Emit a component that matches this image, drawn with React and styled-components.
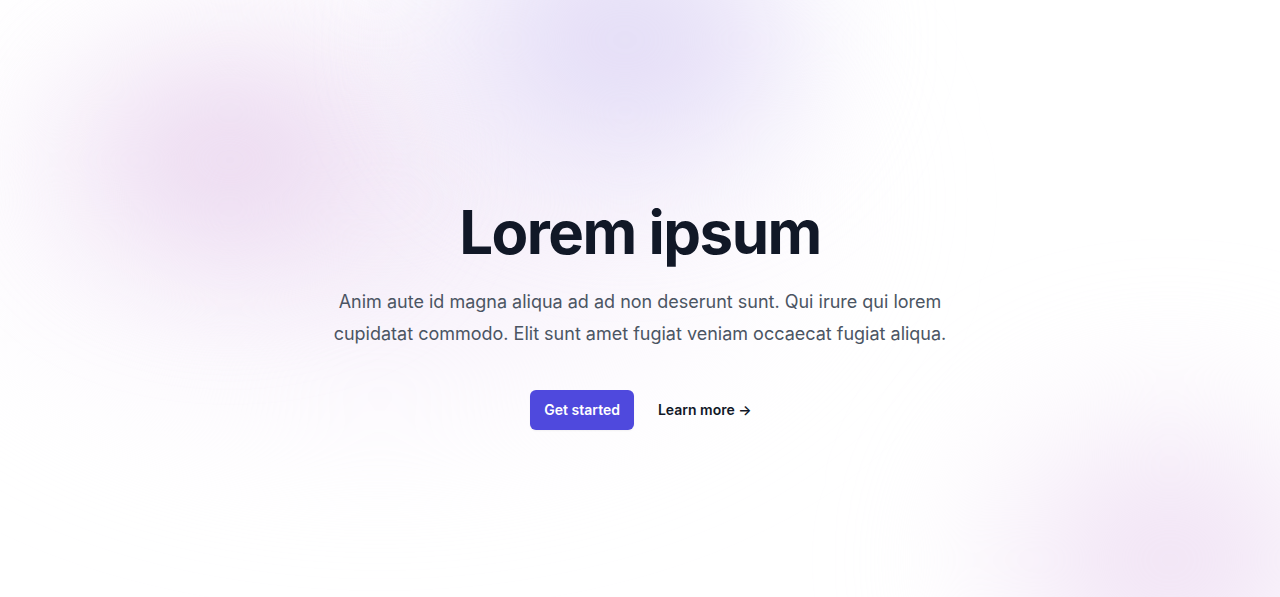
import React from 'react';
import styled, { createGlobalStyle } from 'styled-components';

const GlobalStyle = createGlobalStyle`
  html, body {
    margin: 0;
    padding: 0;
    background: #ffffff;
  }
  body {
    font-family: Inter, 'Noto Sans', sans-serif;
    -webkit-font-smoothing: antialiased;
  }
`;

const Page = styled.div`
  position: relative;
  isolation: isolate;
  overflow: hidden;
  height: 597px;
  background: #ffffff;
`;

const Blob = styled.div`
  position: absolute;
  z-index: -1;
  border-radius: 50%;
  pointer-events: none;
  filter: blur(${p => p.$blur || 60}px);
`;

const Hero = styled.main`
  display: flex;
  flex-direction: column;
  align-items: center;
  text-align: center;
  padding-top: 202px;
`;

const Title = styled.h1`
  margin: 0;
  font-size: 60px;
  line-height: 60px;
  font-weight: 700;
  letter-spacing: -0.025em;
  color: #111827;
`;

const Lead = styled.p`
  margin: 24px 0 0;
  max-width: 640px;
  font-size: 18px;
  line-height: 32px;
  color: #4b5563;
`;

const Actions = styled.div`
  margin-top: 40px;
  padding-left: 2px;
  display: flex;
  align-items: center;
  gap: 24px;
`;

const PrimaryButton = styled.a`
  display: inline-block;
  padding: 10px 14px;
  border-radius: 6px;
  background: #4f49dd;
  color: #ffffff;
  font-size: 14px;
  line-height: 20px;
  font-weight: 600;
  text-decoration: none;
  box-shadow: 0 1px 2px rgba(0, 0, 0, 0.05);
`;

const TextLink = styled.a`
  font-size: 14px;
  line-height: 24px;
  font-weight: 600;
  color: #111827;
  text-decoration: none;
`;

export default function App() {
  return (
    <>
      <GlobalStyle />
      <Page>
        {/* soft background glows */}
        <Blob
          $blur={70}
          style={{ left: -120, top: -80, width: 1000, height: 560, background: 'radial-gradient(closest-side, rgba(243,234,248,0.95), rgba(249,244,252,0.7) 60%, rgba(255,255,255,0))' }}
        />
        <Blob
          $blur={55}
          style={{ left: 30, top: 20, width: 400, height: 280, background: 'radial-gradient(closest-side, #e8d3ed, rgba(238,222,242,0.75) 55%, rgba(255,255,255,0))' }}
        />
        <Blob
          $blur={55}
          style={{ left: 390, top: -140, width: 470, height: 360, background: 'radial-gradient(closest-side, #ddd5f4, rgba(231,225,248,0.75) 55%, rgba(255,255,255,0))' }}
        />
        <Blob
          $blur={65}
          style={{ left: 930, top: 360, width: 480, height: 400, background: 'radial-gradient(closest-side, #ecd8f0, rgba(244,234,248,0.75) 55%, rgba(255,255,255,0))' }}
        />
        <Hero>
          <Title>Lorem ipsum</Title>
          <Lead>
            Anim aute id magna aliqua ad ad non deserunt sunt. Qui irure qui lorem
            cupidatat commodo. Elit sunt amet fugiat veniam occaecat fugiat aliqua.
          </Lead>
          <Actions>
            <PrimaryButton href="#">Get started</PrimaryButton>
            <TextLink href="#">
              Learn more <span aria-hidden="true">→</span>
            </TextLink>
          </Actions>
        </Hero>
      </Page>
    </>
  );
}
